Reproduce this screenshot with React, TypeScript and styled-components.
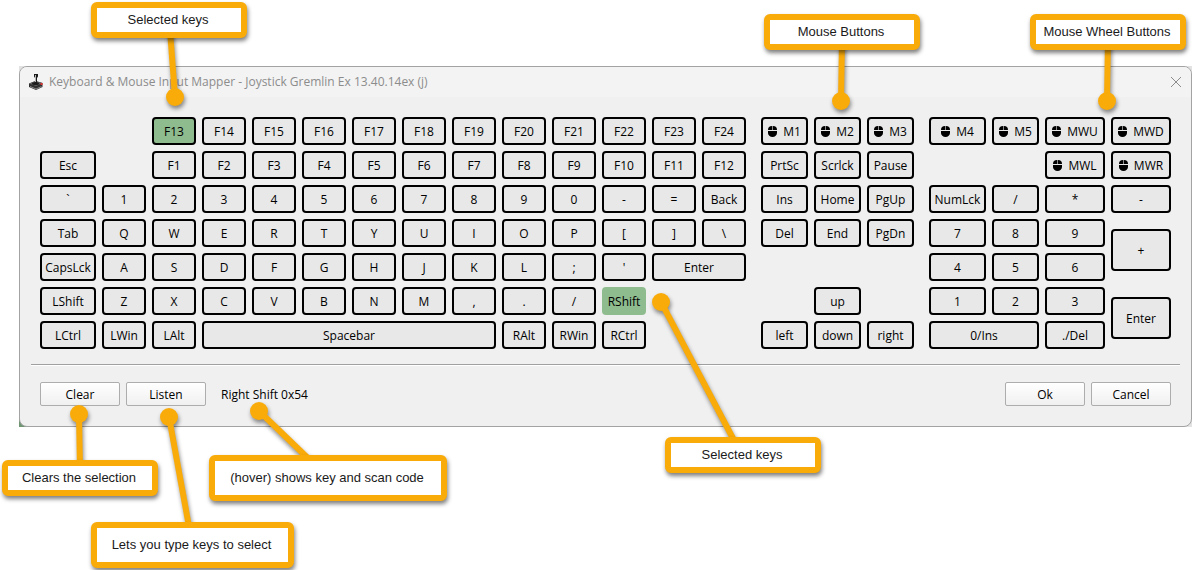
import React from "react";
import styled, { createGlobalStyle, css } from "styled-components";

const GlobalStyle = createGlobalStyle`
  *, *::before, *::after { box-sizing: border-box; }
  body { margin: 0; background: #ffffff; }
`;

const uiFont = css`
  font-family: "Open Sans", "Noto Sans", sans-serif;
  font-size: 12px;
  line-height: 16px;
`;

const Page = styled.main`
  position: relative;
  padding: 66px 0 143px 19px;
  min-width: 1000px;
  overflow: hidden;
`;

const Backdrop = styled.div`
  background: linear-gradient(#6f9573, #6f9573) left bottom / 12px 12px no-repeat, #e2e2e2;
`;

const Window = styled.section`
  border: 1px solid #a3a3a3;
  border-radius: 8px;
  background: #f0f0f0;
  overflow: hidden;
`;

const TitleBar = styled.header`
  ${uiFont}
  display: flex;
  align-items: center;
  gap: 5px;
  height: 30px;
  padding: 0 8px;
  background: #f3f3f3;
  color: #8c8c8c;
`;

const Title = styled.h1`
  flex: 1;
  margin: 0;
  font-size: 12px;
  font-weight: 400;
`;

const CloseButton = styled.button`
  display: flex;
  padding: 1px;
  border: 0;
  background: none;
  color: #8c8c8c;
`;

const KeyGrid = styled.div`
  display: grid;
  grid-template-columns:
    minmax(0, 56fr) repeat(13, minmax(0, 44fr)) 3px
    repeat(3, minmax(0, 47fr)) 3px
    minmax(0, 57fr) minmax(0, 47fr) repeat(2, minmax(0, 60fr));
  grid-auto-rows: 28px;
  gap: 6px;
  padding: 20px 20px 15px;
`;

type KeyPlace = { $row: number; $col: number; $span: number; $tall: boolean; $tone: Tone };
type Tone = "plain" | "selected" | "hovered";

const KeyCap = styled.button<KeyPlace>`
  ${uiFont}
  display: flex;
  align-items: center;
  justify-content: center;
  gap: 6px;
  grid-column: ${(p) => p.$col} / span ${(p) => p.$span};
  grid-row: ${(p) => p.$row} / span ${(p) => (p.$tall ? 2 : 1)};
  align-self: center;
  height: ${(p) => (p.$tall ? 42 : 28)}px;
  padding: 2px 0 0;
  border: 2px solid ${(p) => (p.$tone === "hovered" ? "#8fbc8f" : "#000000")};
  border-radius: 4px;
  background: ${(p) => (p.$tone === "plain" ? "#e8e8e8" : "#8fbc8f")};
  color: #000000;
  white-space: nowrap;
`;

const Divider = styled.hr`
  height: 2px;
  margin: 0 11px;
  border: 0;
  border-top: 1px solid #a0a0a0;
  background: #ffffff;
`;

const Footer = styled.footer`
  ${uiFont}
  display: flex;
  align-items: center;
  gap: 6px;
  padding: 16px 20px 20px;
`;

const PushButton = styled.button`
  ${uiFont}
  width: 80px;
  height: 24px;
  padding: 2px 0 0;
  border: 1px solid #adadad;
  border-radius: 2px;
  background: linear-gradient(#ffffff, #f0f0f0);
  color: #000000;
`;

const Status = styled.output`
  flex: 1;
  padding: 2px 0 0 9px;
`;

const Connectors = styled.svg`
  position: absolute;
  top: 0;
  left: 0;
  pointer-events: none;
  filter: drop-shadow(1px 3px 2px rgba(0, 0, 0, 0.45));
`;

const CalloutBox = styled.aside<{ $x: number; $y: number; $w: number; $h: number }>`
  position: absolute;
  left: ${(p) => p.$x}px;
  top: ${(p) => p.$y}px;
  width: ${(p) => p.$w}px;
  height: ${(p) => p.$h}px;
  display: flex;
  align-items: center;
  justify-content: center;
  padding-right: 2px;
  border: 6px solid #f9ab0a;
  border-radius: 6px;
  background: #ffffff;
  box-shadow: 1px 3px 4px rgba(0, 0, 0, 0.5);
  color: #1a1a1a;
  font: 13px/16px "Liberation Sans", Arial, sans-serif;
  white-space: nowrap;
`;

type KeyDef = {
  label: string;
  row: number;
  col: number;
  span?: number;
  tall?: boolean;
  mouse?: boolean;
  tone?: Tone;
};

const run = (row: number, col: number, labels: string[]): KeyDef[] =>
  labels.map((label, i) => ({ label, row, col: col + i }));

const functionKeys = (row: number, first: number): KeyDef[] =>
  Array.from({ length: 12 }, (_, i) => ({ label: `F${first + i}`, row, col: 3 + i }));

const KEYS: KeyDef[] = [
  { label: "F13", row: 1, col: 3, tone: "selected" },
  ...functionKeys(1, 13).slice(1),
  { label: "M1", row: 1, col: 16, mouse: true },
  { label: "M2", row: 1, col: 17, mouse: true },
  { label: "M3", row: 1, col: 18, mouse: true },
  { label: "M4", row: 1, col: 20, mouse: true },
  { label: "M5", row: 1, col: 21, mouse: true },
  { label: "MWU", row: 1, col: 22, mouse: true },
  { label: "MWD", row: 1, col: 23, mouse: true },

  { label: "Esc", row: 2, col: 1 },
  ...functionKeys(2, 1),
  ...run(2, 16, ["PrtSc", "Scrlck", "Pause"]),
  { label: "MWL", row: 2, col: 22, mouse: true },
  { label: "MWR", row: 2, col: 23, mouse: true },

  ...run(3, 1, ["`", "1", "2", "3", "4", "5", "6", "7", "8", "9", "0", "-", "=", "Back"]),
  ...run(3, 16, ["Ins", "Home", "PgUp"]),
  ...run(3, 20, ["NumLck", "/", "*", "-"]),

  ...run(4, 1, ["Tab", "Q", "W", "E", "R", "T", "Y", "U", "I", "O", "P", "[", "]", "\\"]),
  ...run(4, 16, ["Del", "End", "PgDn"]),
  ...run(4, 20, ["7", "8", "9"]),
  { label: "+", row: 4, col: 23, tall: true },

  ...run(5, 1, ["CapsLck", "A", "S", "D", "F", "G", "H", "J", "K", "L", ";", "'"]),
  { label: "Enter", row: 5, col: 13, span: 2 },
  ...run(5, 20, ["4", "5", "6"]),

  ...run(6, 1, ["LShift", "Z", "X", "C", "V", "B", "N", "M", ",", ".", "/"]),
  { label: "RShift", row: 6, col: 12, tone: "hovered" },
  { label: "up", row: 6, col: 17 },
  ...run(6, 20, ["1", "2", "3"]),
  { label: "Enter", row: 6, col: 23, tall: true },

  ...run(7, 1, ["LCtrl", "LWin", "LAlt"]),
  { label: "Spacebar", row: 7, col: 4, span: 6 },
  ...run(7, 10, ["RAlt", "RWin", "RCtrl"]),
  ...run(7, 16, ["left", "down", "right"]),
  { label: "0/Ins", row: 7, col: 20, span: 2 },
  { label: "./Del", row: 7, col: 22 },
];

type CalloutDef = {
  text: string;
  x: number;
  y: number;
  w: number;
  h: number;
  from: [number, number];
  to: [number, number];
};

const CALLOUTS: CalloutDef[] = [
  { text: "Selected keys", x: 91, y: 2, w: 156, h: 36, from: [170, 30], to: [175, 97] },
  { text: "Mouse Buttons", x: 764, y: 14, w: 156, h: 36, from: [842, 40], to: [841, 101] },
  { text: "Mouse Wheel Buttons", x: 1030, y: 14, w: 156, h: 36, from: [1108, 40], to: [1107, 101] },
  { text: "Clears the selection", x: 2, y: 460, w: 156, h: 36, from: [80, 470], to: [79, 414] },
  { text: "(hover) shows key and scan code", x: 209, y: 455, w: 238, h: 46, from: [314, 464], to: [259, 411] },
  { text: "Lets you type keys to select", x: 91, y: 522, w: 203, h: 46, from: [190, 532], to: [169, 417] },
  { text: "Selected keys", x: 665, y: 437, w: 156, h: 36, from: [737, 446], to: [661, 302] },
];

const MouseIcon = () => (
  <svg width="9" height="12" viewBox="0 0 9 12" aria-hidden="true">
    <path d="M0 4a4 4 0 0 1 4-4h1a4 4 0 0 1 4 4Z" fill="#000" />
    <path d="M4 0h1v4H4Z" fill="#8a8a8a" />
    <path d="M0 5h9v2a4.500 4 0 0 1-9 0Z" fill="#000" />
  </svg>
);

const JoystickIcon = () => (
  <svg width="16" height="16" viewBox="0 0 16 16" aria-hidden="true">
    <path d="M1 9.500 7.500 7l7 2v4L8 16 1 13Z" fill="#2e2e2e" />
    <path d="M1 9.500 7.500 7l7 2L8 12Z" fill="#626262" />
    <path d="M2 12.500 8 15l5.500-2.500" stroke="#8a8a8a" fill="none" />
    <ellipse cx="7.500" cy="9.500" rx="3.500" ry="1.500" fill="#1c1c1c" />
    <path d="M6 0h4v2.500L9 4v5.500H7V4L6 2.500Z" fill="#1a1a1a" />
    <path d="M7 1h1v7H7Z" fill="#b5b5b5" />
    <path d="M12.500 9h2v2h-2Z" fill="#e03030" />
  </svg>
);

const Key = ({ label, row, col, span = 1, tall = false, mouse, tone = "plain" }: KeyDef) => (
  <KeyCap type="button" $row={row} $col={col} $span={span} $tall={tall} $tone={tone}>
    {mouse && <MouseIcon />}
    {label}
  </KeyCap>
);

export default function App() {
  return (
    <Page>
      <GlobalStyle />
      <Backdrop>
        <Window>
          <TitleBar>
            <JoystickIcon />
            <Title>Keyboard &amp; Mouse Input Mapper - Joystick Gremlin Ex 13.40.14ex (j)</Title>
            <CloseButton type="button" aria-label="Close">
              <svg width="12" height="12" viewBox="0 0 12 12" aria-hidden="true">
                <path d="M1 1l10 10M11 1 1 11" stroke="currentColor" fill="none" />
              </svg>
            </CloseButton>
          </TitleBar>
          <KeyGrid>
            {KEYS.map((k) => (
              <Key key={`${k.row}-${k.col}`} {...k} />
            ))}
          </KeyGrid>
          <Divider />
          <Footer>
            <PushButton type="button">Clear</PushButton>
            <PushButton type="button">Listen</PushButton>
            <Status>Right Shift 0x54</Status>
            <PushButton type="button">Ok</PushButton>
            <PushButton type="button">Cancel</PushButton>
          </Footer>
        </Window>
      </Backdrop>
      <Connectors width="1192" height="570" viewBox="0 0 1192 570" aria-hidden="true">
        {CALLOUTS.map((c) => (
          <g key={`${c.x}-${c.y}`} fill="#f9ab0a" stroke="#f9ab0a">
            <line x1={c.from[0]} y1={c.from[1]} x2={c.to[0]} y2={c.to[1]} strokeWidth="6" />
            <circle cx={c.to[0]} cy={c.to[1]} r="9" stroke="none" />
          </g>
        ))}
      </Connectors>
      {CALLOUTS.map((c) => (
        <CalloutBox key={`${c.x}-${c.y}`} $x={c.x} $y={c.y} $w={c.w} $h={c.h}>
          {c.text}
        </CalloutBox>
      ))}
    </Page>
  );
}
